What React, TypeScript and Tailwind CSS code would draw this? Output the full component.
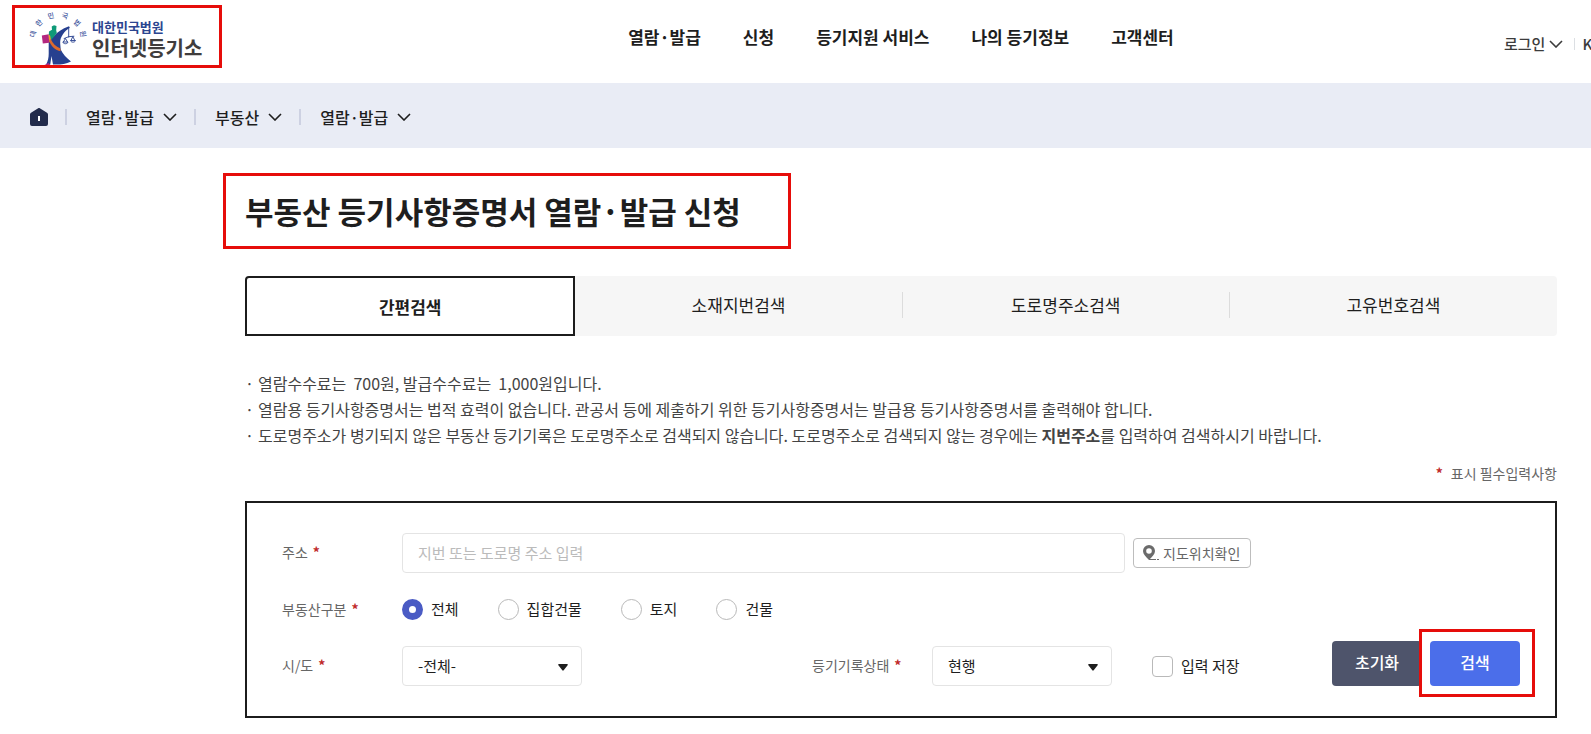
import { useState } from 'react';

const MENU = ['열람·발급', '신청', '등기지원 서비스', '나의 등기정보', '고객센터'];
const PATH = ['열람·발급', '부동산', '열람·발급'];
const TABS = ['간편검색', '소재지번검색', '도로명주소검색', '고유번호검색'];
const KINDS = ['전체', '집합건물', '토지', '건물'];

// letters that run in an arc above the emblem
const ARC = [
  { char: '대', x: 33, y: 34, angle: -75 },
  { char: '한', x: 39, y: 23, angle: -45 },
  { char: '민', x: 51, y: 16, angle: -12 },
  { char: '국', x: 65, y: 16, angle: 15 },
  { char: '법', x: 77, y: 23, angle: 45 },
  { char: '원', x: 83, y: 34, angle: 80 },
];

const Chevron = () => (
  <svg className="h-2 w-3.5 shrink-0" viewBox="0 0 14 8" fill="none" stroke="currentColor" strokeWidth="1.6" aria-hidden="true">
    <path d="M1 1l6 6 6-6" />
  </svg>
);

const Emblem = () => (
  <svg className="h-14 w-[60px] shrink-0" viewBox="28 9 60 56" aria-hidden="true">
    {ARC.map((item) => (
      <text
        key={item.char}
        x={item.x}
        y={item.y + 2.5}
        fontSize="7"
        fontWeight="500"
        textAnchor="middle"
        fill="#3b539c"
        transform={`rotate(${item.angle} ${item.x} ${item.y})`}
      >
        {item.char}
      </text>
    ))}
    <path d="M54 36c3-3.500 8-7.500 15-9.800l.8 1.600c-3 1.700-5.300 4-7 6.700-2 3-2.800 5.500-2.600 9l.5 6c2 4.500 6 8.500 10.300 12C65 64.500 59 64.800 53 64.500L51.500 56l-1.300 8.800H46c2-4 2.700-7 2.700-11V42z" fill="#27408f" />
    <path d="M51.700 26.500l2.300-1.200 2.500.7-.3 4.300.6 2.700-3 4-3.800 4-1.500-3 .5-6.500 3-1.700z" fill="#0f9a78" />
    <path d="M41.800 35.500l6.900-1.300.6 8.600-6.500.7z" fill="#b3277f" />
    <path d="M48.500 34.500l1.700 1.300.8 4-1.800 2.500z" fill="#f0a02c" />
    <path d="M49 40.500l1.700-1.500c2 4.500 5 7.500 9.700 9.500l.2 2.800C55.500 50 51 46.500 49 40.500z" fill="#dc6a2e" />
    <path d="M44.500 65l4-2 1.500 2z" fill="#b3277f" />
    <g fill="none" stroke="#27408f" strokeWidth="0.9">
      <path d="M68.700 27.500v10M63.700 38.700l5-2 5.600-.5M65.500 38.500l-2.200 3.500M65.500 38.500l2 3.500M72.800 36.500l-1.800 4M72.800 36.500l2 4" />
      <path d="M62.800 42c.6 2.300 4.800 2.300 5.200 0zM70.500 40.500c.6 2.200 4.400 2.200 5 0z" />
    </g>
  </svg>
);

const Required = () => <span className="ml-[5px] font-bold text-[#c02a2a]">*</span>;

interface SelectProps {
  id: string;
  options: string[];
}

const SelectBox = ({ id, options }: SelectProps) => (
  <div className="relative w-[180px] shrink-0">
    <select id={id} className="h-10 w-full appearance-none rounded border border-[#e4e4e4] bg-white pl-[15px] pr-8 text-[15px] text-[#1e1e1e]">
      {options.map((option) => (
        <option key={option}>{option}</option>
      ))}
    </select>
    <svg className="pointer-events-none absolute right-3.5 top-[18px] h-[7px] w-2.5" viewBox="0 0 10 7" aria-hidden="true">
      <path d="M1 0h8a.7.7 0 0 1 .6 1.200L5.700 6.300a.9.9 0 0 1-1.400 0L.4 1.200A.7.7 0 0 1 1 0z" fill="#1e1e1e" />
    </svg>
  </div>
);

export default function App() {
  const [tab, setTab] = useState(TABS[0]);
  const [kind, setKind] = useState(KINDS[0]);

  return (
    <div className="min-h-screen overflow-x-hidden bg-white pb-4 font-['Noto_Sans_CJK_KR',sans-serif] text-[#1e1e1e]">
      <header className="grid h-[83px] grid-cols-[245px_1fr_87px]">
        <a href="#" className="ml-3 mt-[5px] flex h-[63px] w-[210px] border-[3px] border-[#e60d0a] pl-[13px] pt-px">
          <Emblem />
          <span className="ml-1 mt-2 flex flex-col gap-px font-bold">
            <span className="text-[13px] leading-5 text-[#2b4590]">대한민국법원</span>
            <span className="text-xl leading-5 text-[#403d3d]">인터넷등기소</span>
          </span>
        </a>
        <nav className="flex h-[74px] items-center justify-center gap-[42px] pl-[53px] text-[17px] font-bold">
          {MENU.map((name) => (
            <a key={name} href="#" className="whitespace-nowrap">{name}</a>
          ))}
        </nav>
        <div className="flex h-[88px] items-center text-[15px] font-medium text-[#3c3c3c]">
          <button className="flex items-center gap-1 whitespace-nowrap">
            로그인 <Chevron />
          </button>
          <span className="ml-[11px] h-3 w-px shrink-0 bg-[#dcdfe3]" />
          <a href="#" className="ml-[7px]">K</a>
        </div>
      </header>

      <nav className="flex h-[65px] items-center bg-[#e9ecf5] pl-[30px] pt-0.5 text-base font-medium">
        <a href="#" aria-label="홈">
          <svg className="h-[18px] w-[18px]" viewBox="0 0 18 18" aria-hidden="true">
            <path d="M7.800.4a2 2 0 0 1 2.400 0l6.800 4.400a2 2 0 0 1 1 1.700V16a2 2 0 0 1-2 2H2a2 2 0 0 1-2-2V6.500a2 2 0 0 1 1-1.700z" fill="#222b4b" />
            <path d="M8 8h2v5H8z" fill="#fff" />
          </svg>
        </a>
        {PATH.map((name, index) => (
          <div key={index} className="flex items-center">
            <span className="ml-[17px] mr-[19px] h-4 w-0.5 bg-[#cdd1e2]" />
            <button className="flex items-center gap-[9px]">
              {name} <Chevron />
            </button>
          </div>
        ))}
      </nav>

      <main className="ml-[245px] mr-[34px]">
        <h1 className="-ml-[22px] mt-[25px] flex h-[76px] w-[568px] items-center whitespace-nowrap border-[3px] border-[#e60d0a] pl-[19px] text-[31px] font-bold">
          부동산 등기사항증명서 열람·발급 신청
        </h1>

        <div role="tablist" className="mt-[27px] grid h-[60px] grid-cols-[1.01fr_1fr_1fr_1fr] rounded bg-[#f6f6f6] text-[17px]">
          {TABS.map((name, index) => (
            <button
              key={name}
              role="tab"
              aria-selected={tab === name}
              onClick={() => setTab(name)}
              className={
                tab === name
                  ? 'rounded-tl border-2 border-[#1c1c1c] bg-white pt-0.5 font-bold'
                  : 'flex items-center pb-0.5'
              }
            >
              <span className={tab !== name && index < TABS.length - 1 ? 'flex h-[26px] w-full items-center justify-center border-r border-[#dcdcdc]' : 'w-full'}>
                {name}
              </span>
            </button>
          ))}
        </div>

        <ul className="mt-[34px] text-base leading-[26px] text-[#444]">
          <li className="flex gap-1"><span>·</span><p className="whitespace-pre">열람수수료는  700원, 발급수수료는  1,000원입니다.</p></li>
          <li className="flex gap-1"><span>·</span><p>열람용 등기사항증명서는 법적 효력이 없습니다. 관공서 등에 제출하기 위한 등기사항증명서는 발급용 등기사항증명서를 출력해야 합니다.</p></li>
          <li className="flex gap-1"><span>·</span><p>도로명주소가 병기되지 않은 부동산 등기기록은 도로명주소로 검색되지 않습니다. 도로명주소로 검색되지 않는 경우에는 <b>지번주소</b>를 입력하여 검색하시기 바랍니다.</p></li>
        </ul>

        <p className="mt-[15px] text-right text-sm leading-5 text-[#666]">
          <span className="mr-2 font-bold text-[#c02a2a]">*</span>표시 필수입력사항
        </p>

        <form className="mt-[18px] flex items-end border-2 border-[#1c1c1c] px-[35px] py-[30px]" onSubmit={(e) => e.preventDefault()}>
          <div className="mr-[81px] flex flex-1 flex-col gap-[26px]">
            <div className="flex items-center">
              <label htmlFor="address" className="w-[120px] pb-0.5 text-sm text-[#666]">주소<Required /></label>
              <input
                id="address"
                type="text"
                placeholder="지번 또는 도로명 주소 입력"
                className="h-10 min-w-0 flex-1 rounded border border-[#e4e4e4] px-[15px] pb-0.5 text-[15px] placeholder:text-[#bbb]"
              />
              <button type="button" className="ml-2 flex h-[30px] w-[118px] items-center gap-1 rounded border border-[#bdbdbd] pl-[9px] text-sm text-[#666]">
                <svg className="h-4 w-4" viewBox="0 0 16 16" aria-hidden="true">
                  <path fillRule="evenodd" d="M6 0a6 6 0 0 1 6 6c0 3-2.500 5.500-6 9C2.500 11.500 0 9 0 6a6 6 0 0 1 6-6zm0 3.200a2.800 2.800 0 1 0 0 5.600 2.800 2.800 0 0 0 0-5.600z" fill="#6b6b6b" />
                  <path d="M6 14.500h7M14 14.500h2" stroke="#6b6b6b" />
                </svg>
                지도위치확인
              </button>
            </div>

            <div role="radiogroup" aria-labelledby="kind-label" className="flex h-[21px] items-center">
              <span id="kind-label" className="w-[120px] pb-0.5 text-sm text-[#666]">부동산구분<Required /></span>
              <div className="flex gap-[39px]">
                {KINDS.map((name) => (
                  <label key={name} className="flex items-center gap-2 text-[15px]">
                    <input
                      type="radio"
                      name="kind"
                      checked={kind === name}
                      onChange={() => setKind(name)}
                      className="h-[21px] w-[21px] appearance-none rounded-full border border-[#b9b9b9] bg-white checked:border-[7px] checked:border-[#4a5bc4]"
                    />
                    {name}
                  </label>
                ))}
              </div>
            </div>

            <div className="flex items-center">
              <label htmlFor="region" className="w-[120px] pb-0.5 text-sm text-[#666]">시/도<Required /></label>
              <SelectBox id="region" options={['-전체-']} />
              <div className="ml-auto flex w-[439px] items-center">
                <label htmlFor="state" className="w-[120px] pb-0.5 text-sm text-[#666]">등기기록상태<Required /></label>
                <SelectBox id="state" options={['현행']} />
                <label className="ml-10 flex items-center gap-2 text-[15px]">
                  <input type="checkbox" className="h-[21px] w-[21px] appearance-none rounded border border-[#b9b9b9] bg-white checked:bg-[#4a5bc4]" />
                  입력 저장
                </label>
              </div>
            </div>
          </div>

          <div className="flex gap-2 text-base font-medium text-white">
            <button type="reset" className="h-[45px] w-[90px] rounded bg-[#4e546b] pb-1">초기화</button>
            <div className="relative">
              <button type="submit" className="h-[45px] w-[90px] rounded bg-[#4b6eea] pb-1">검색</button>
              <span className="pointer-events-none absolute -bottom-[11px] -left-[11px] -right-[15px] -top-3 border-[3px] border-[#e60d0a]" />
            </div>
          </div>
        </form>
      </main>
    </div>
  );
}
